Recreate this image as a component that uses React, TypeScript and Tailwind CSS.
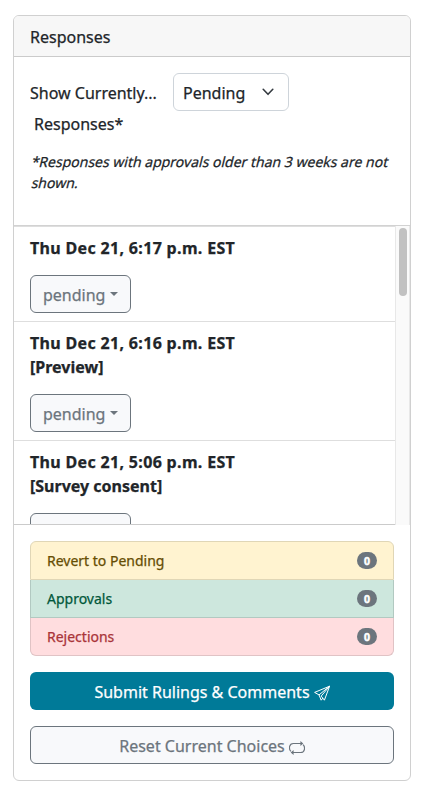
import React from "react";

type Item = { date: string; note?: string };

const items: Item[] = [
  { date: "Thu Dec 21, 6:17 p.m. EST" },
  { date: "Thu Dec 21, 6:16 p.m. EST", note: "[Preview]" },
  { date: "Thu Dec 21, 5:06 p.m. EST", note: "[Survey consent]" },
];

const rulings = [
  { label: "Revert to Pending", tone: "rounded-t-[6px] border-t bg-[#fff3d0] border-[#e0d6b6] text-[#664d03]" },
  { label: "Approvals", tone: "bg-[#cde7dd] border-[#b2c9c1] text-[#00573a]" },
  { label: "Rejections", tone: "rounded-b-[6px] bg-[#ffdddf] border-[#e0c3c5] text-[#a93439]" },
];

function PendingButton() {
  return (
    <button className="mt-[15px] flex h-[38px] w-[101px] items-center rounded-[6px] border border-[#6c757d] bg-[#f8f9fb] pl-3 text-[#6c757d]">
      <span className="pt-[2px]">pending</span>
      <span className="ml-[5px] h-0 w-0 border-x-4 border-t-4 border-x-transparent border-t-[#6c757d]" />
    </button>
  );
}

function SendIcon() {
  return (
    <svg className="ml-1 mt-1 h-4 w-4" viewBox="0 0 16 16" fill="none" stroke="currentColor" strokeLinejoin="round" strokeWidth="1">
      <path d="M15.6 1.2.6 7.4 5 9.9Z" />
      <path d="M15.6 1.2 7.2 11.1 10.4 15.2Z" />
      <path d="M5 9.9 7.2 15.2 8.8 13.1" />
    </svg>
  );
}

function RepeatIcon() {
  return (
    <svg className="ml-1 mt-1 h-4 w-4" viewBox="0 0 16 16" fill="none" stroke="currentColor" strokeWidth="1.2">
      <path d="M1.9 12.4C-.6 9.8.2 4.5 4.3 4.5H12M14.1 5.6C16.6 8.2 15.8 13.5 11.7 13.5H4" />
      <path d="M11.4 2 14.3 4.5 11.4 7ZM4.6 11 1.7 13.5 4.6 16Z" fill="currentColor" stroke="none" />
    </svg>
  );
}

export default function App() {
  return (
    <div className="h-[794px] bg-white px-[13px] pt-[15px] font-['Noto_Sans',sans-serif] text-base leading-6 text-[#212529] [-webkit-text-stroke:0.25px]">
      <div className="flex h-[766px] w-[398px] flex-col overflow-hidden rounded-[6px] border border-[#d0d0d0]">
        <header className="h-[41px] shrink-0 border-b border-[#cbcbcb] bg-[#f7f7f7] px-4 pt-[9px]">Responses</header>
        <section className="h-[169px] shrink-0 border-b border-[#d2d2d2] px-4 pt-4">
          <div className="flex h-[38px] items-center">
            <span className="w-[143px] pt-px">Show Currently...</span>
            <div className="flex h-[38px] w-[116px] items-center justify-between rounded-[6px] border border-[#ced4da] pr-3 pl-[9px]">
              <span className="pt-px">Pending</span>
              <svg className="h-4 w-4" viewBox="0 0 16 16">
                <path d="m3.2 5.3 4.8 5 4.8-5" fill="none" stroke="#343a40" strokeWidth="1.6" strokeLinecap="round" strokeLinejoin="round" />
              </svg>
            </div>
          </div>
          <div className="pt-px pl-1">Responses*</div>
          <p className="mt-[15px] pl-[1.5px] text-[14px] leading-[21px] whitespace-nowrap">
            <span className="block -skew-x-[14deg]">*Responses with approvals older than 3 weeks are not</span>
            <span className="block -skew-x-[14deg]">shown.</span>
          </p>
        </section>
        <section className="flex h-[299px] shrink-0 overflow-hidden">
          <div className="h-[299px] w-[381px] overflow-y-auto border-y border-t-[#dedede] border-b-[#cbcbcb] [scrollbar-width:none]">
            {items.map((item) => (
              <article key={item.date} className="border-b border-[#dedede] px-4 pt-[9px] pb-2">
                <div className="font-bold tracking-[0.33px]">{item.date}</div>
                {item.note && <div className="font-bold">{item.note}</div>}
                <PendingButton />
              </article>
            ))}
          </div>
          <div className="flex w-[15px] justify-center border-x border-[#e8e8e8] bg-[#fafafa] pt-[2px]">
            <div className="h-[68px] w-2 rounded-full bg-[#c1c1c1]" />
          </div>
        </section>
        <section className="px-4 pt-4">
          <ul className="text-[14px] leading-[21px]">
            {rulings.map((row) => (
              <li key={row.label} className={"flex items-center justify-between border-x border-b px-4 py-2 " + row.tone}>
                <span>{row.label}</span>
                <span className="flex h-[17px] w-5 items-center justify-center rounded-full bg-[#6c757d] pt-px text-[10.5px] leading-none font-bold text-white [-webkit-text-stroke:0.5px]">0</span>
              </li>
            ))}
          </ul>
          <button className="mt-4 flex h-[38px] w-full items-center justify-center rounded-[6px] bg-[#007a98] text-white">
            <span className="pt-[2px]">Submit Rulings &amp; Comments</span>
            <SendIcon />
          </button>
          <button className="mt-4 flex h-[38px] w-full items-center justify-center rounded-[6px] border border-[#6c757d] bg-[#f8f9fb] text-[#6c757d]">
            <span className="pt-[2px]">Reset Current Choices</span>
            <RepeatIcon />
          </button>
        </section>
      </div>
    </div>
  );
}
